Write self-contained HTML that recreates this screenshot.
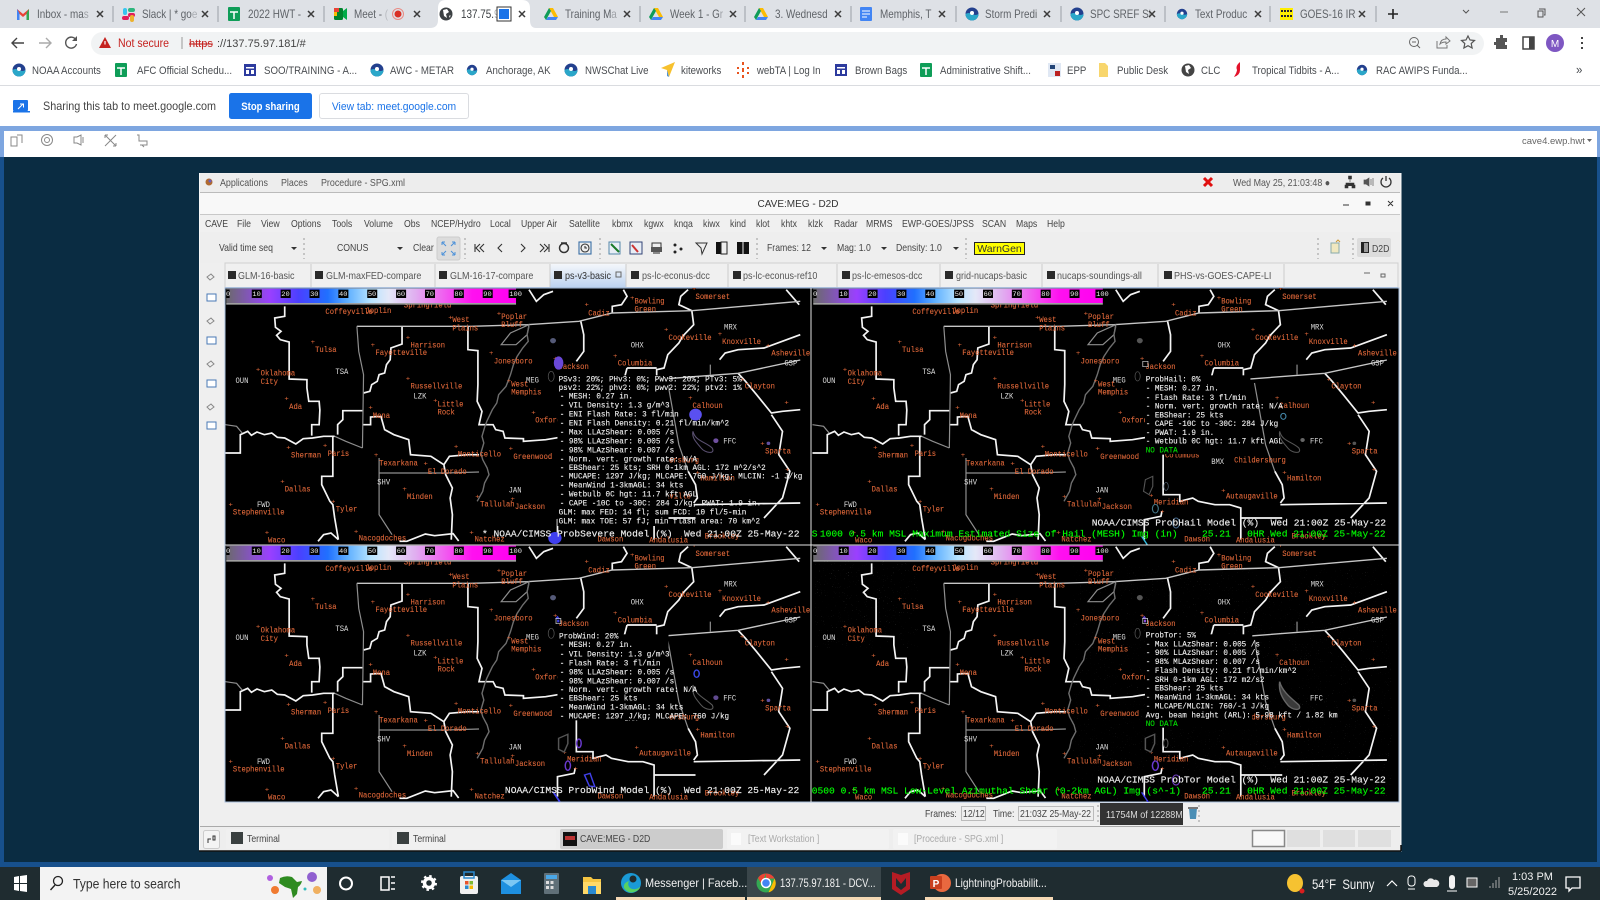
<!DOCTYPE html>
<html><head><meta charset="utf-8"><title>CAVE</title>
<style>
html,body{margin:0;padding:0;width:1600px;height:900px;overflow:hidden;background:#0a2c42}
svg{display:block}
text{white-space:pre}
.s{font-family:"Liberation Sans",sans-serif}
.tab text,.bk text,.g text,.mn text,text.mn,.tt text,text.tk,text.nw,.ro text,text.lb,text.id,.ti,.gr text{transform-box:fill-box;transform-origin:0 0}
.tab text{font-size:11.5px;fill:#5f6368;transform:scaleX(.86)}
.bk text{font-size:11px;fill:#4a4d51;transform:scaleX(.88)}
.g text{font-size:10px;fill:#555;transform:scaleX(.89)}
.mn text,text.mn{font-size:10px;fill:#444;transform:scaleX(.87)}
.tt text{font-size:10px;fill:#555;transform:scaleX(.9)}
text.tk{font-size:11.5px;fill:#f2f2f2;transform:scaleX(.88)}
.ln{fill:none;vector-effect:non-scaling-stroke}
.ro text{font-family:"Liberation Mono",monospace;font-size:24px;fill:#f0f0f0;stroke:#f0f0f0;stroke-width:.35px;transform:scaleX(.86)}
.ti{font-family:"Liberation Mono",monospace;font-size:28px;fill:#f0f0f0;stroke:#f0f0f0;stroke-width:.4px;transform:scaleX(.93)}
.gr text{font-family:"Liberation Mono",monospace;font-size:28px;fill:#0f0;stroke:#0f0;stroke-width:.4px;transform:scaleX(.93)}
text.lb{font-family:"Liberation Mono",monospace;font-size:24px;fill:#e0683a;stroke:#e0683a;stroke-width:.3px;transform:scaleX(.81)}
text.id{font-family:"Liberation Mono",monospace;font-size:24px;fill:#ddd;transform:scaleX(.81)}
.pl{font-family:"Liberation Mono",monospace;font-size:20px;fill:#e0683a}
.cb{font-family:"Liberation Mono",monospace;font-size:19px;fill:#eee;text-anchor:middle}
.c{transform-box:fill-box;transform-origin:50% 0}
</style></head>
<body>
<svg width="1600" height="900" viewBox="0 0 1600 900" class="s" xmlns="http://www.w3.org/2000/svg">
<defs>
<linearGradient id="cbar" x1="0" x2="1" y1="0" y2="0">
<stop offset="0" stop-color="#6a6a6a"/><stop offset=".1" stop-color="#8a50d0"/><stop offset=".15" stop-color="#9a40ff"/><stop offset=".25" stop-color="#4a40ff"/><stop offset=".35" stop-color="#2070ff"/><stop offset=".42" stop-color="#60b0ff"/><stop offset=".5" stop-color="#b8e4ff"/><stop offset=".56" stop-color="#e4e8f8"/><stop offset=".65" stop-color="#e0b0f0"/><stop offset=".75" stop-color="#f060f0"/><stop offset=".85" stop-color="#ff10f0"/><stop offset="1" stop-color="#ff00f0"/>
</linearGradient>
<linearGradient id="act" x1="0" x2="0" y1="0" y2="1"><stop offset="0" stop-color="#f4f7fb"/><stop offset="1" stop-color="#bdd3f0"/></linearGradient>
<filter id="nz" x="0" y="0" width="1" height="1"><feTurbulence type="fractalNoise" baseFrequency=".55" numOctaves="1" seed="4"/><feColorMatrix values="0 0 0 0 .7 0 0 0 0 .7 0 0 0 0 .7 7 0 0 0 -5"/></filter>
<path id="x" d="M-3-3L3 3M3-3L-3 3" stroke="#3c3c3c" stroke-width="1.5" fill="none"/>
<g id="noaa"><circle r="6.5" fill="#23408e"/><path d="M-6.5 0a6.5 6.5 0 0 0 13 0q-3 2-6.5 0t-6.5 0z" fill="#2ba7c9"/><circle r="2" cy="-1" fill="#fff"/></g>
<g id="drive"><path d="M-2-6h4l5 9h-4z" fill="#fbbc04"/><path d="M-2-6L-7 3l2 3 5-9z" fill="#0f9d58"/><path d="M-5 6h10l2-3H-3z" fill="#4285f4"/></g>
<g id="sheet"><rect x="-6" y="-7" width="12" height="14" rx="1" fill="#0f9d58"/><path d="M-4-2h8M0-2v7" stroke="#fff" stroke-width="1.5"/></g>
<g id="site"><rect x="-6" y="-6" width="12" height="12" fill="#2d3b9e"/><path d="M-4-3h8v1.5h-8zM-4 0h3v4h-3zM1 0h3v4H1z" fill="#fff"/></g>
<g id="base">
<path class="ln" stroke="#f4f4f4" stroke-width="1.7" d="M175 65v30l-27 5 2 28 15 12-12 12 10 13 24 7v111l48 2v25l5 40h28l2 26-2 44h-20v33M492 127v51l-30 12-2 35-10 15-5 25-15 5-5 20-15 10-5 20-17 5M670 127v68l27 3v102l-2 50 13 30-8 40h38l7 15 20 5 5 20 50 2v8l60-5 55-10M15 505h40v-55l20-10 10 12 15-10 20 8 20-5 15 13 20 2 30 18 20-16 25-2 30-5 30 0M385 378h-53v27l-14 15v30M305 455v120h-30v25l22 50 8 10 5 40 10 65M385 420h22v-23l28-2 10 40 25 15 40 15 5 45 55 5 35 25 15-25 50-5 30 0M605 540l5 30 18 40-6 30 6 50-3 75M1090 15l10 20-15 25-25 5v20M1265 15l-20 20-5 25 35 18 5 42-30 35-10 20-30 35-10 40-20 5v30M1100 250h80M1100 250l-10 42M835 15l20 35 20-20 25-10M1530 15l35 45M975 110l8 40v50l-20 30M1350 225l15-20 35-10 70-5 98-40M1400 266l20 24 30 40 40 55 30-5 48-5M1490 390l30 50-10 70 30 50-20 80-50 60M963 510v120h45v20l35-10 15 10 45 10h40l30 10v95M1173 700h112M1280 660l288-5M1280 655l10-15-5-40-20-40M912 765v-60l45-10 3-15M265 770l15-20 20-5 20 20M485 770h20l50-22 25 5 50-6 15 22"/>
<path class="ln" stroke="#c6c6c6" stroke-width="1.4" d="M370 125h310l150-5 140-10 90-25 215-7 293-28M1090 292l310-26 168-40"/>
<path class="ln" stroke="#8e8e8e" stroke-width="1.2" d="M370 125l5 75 13 70-3 220M430 520v170l35 60M430 565h180l90-3M835 120l-5 30-30 30h-40l25-35zM1210 295l30 185 25 80M1325 240v30M15 420l30 5 15 20M310 455l30 15 45 20"/>
<path class="ln" stroke="#6e6e6e" stroke-width="1.4" d="M835 125l-5 25 3 20-15 20-15 25-10 25-8 30-12 35-20 25-5 25-12 20-15 35-5 15-8 30 5 20-8 30 5 20 12 25 5 20-12 25-5 25-15 30"/>
<text class="lb" x="285" y="88">Coffeyville</text><text class="lb" x="393" y="85">Joplin</text><text class="lb" x="497" y="68">Springfield</text><text class="lb" x="1120" y="56">Bowling</text><text class="lb" x="1120" y="80">Green</text><text class="lb" x="1285" y="43">Somerset</text><text class="lb" x="995" y="92">Cadiz</text><text class="lb" x="628" y="112">West</text><text class="lb" x="628" y="137">Plains</text><text class="lb" x="760" y="103">Poplar</text><text class="lb" x="760" y="127">Bluff</text><text class="lb" x="1212" y="166">Cookeville</text><text class="lb" x="1357" y="178">Knoxville</text><text class="lb" x="1490" y="213">Asheville</text><text class="lb" x="257" y="202">Tulsa</text><text class="lb" x="515" y="189">Harrison</text><text class="lb" x="420" y="211">Fayetteville</text><text class="lb" x="740" y="236">Jonesboro</text><text class="lb" x="915" y="253">Jackson</text><text class="lb" x="1075" y="243">Columbia</text><text class="lb" x="110" y="273">Oklahoma</text><text class="lb" x="110" y="298">City</text><text class="lb" x="515" y="311">Russellville</text><text class="lb" x="588" y="366">Little</text><text class="lb" x="588" y="390">Rock</text><text class="lb" x="787" y="305">West</text><text class="lb" x="787" y="330">Memphis</text><text class="lb" x="1418" y="311">Clayton</text><text class="lb" x="1277" y="370">Calhoun</text><text class="lb" x="187" y="373">Ada</text><text class="lb" x="413" y="400">Mena</text><text class="lb" x="852" y="414">Oxford</text><text class="lb" x="192" y="519">Sherman</text><text class="lb" x="291" y="514">Paris</text><text class="lb" x="643" y="516">Monticello</text><text class="lb" x="793" y="523">Greenwood</text><text class="lb" x="1473" y="506">Sparta</text><text class="lb" x="430" y="542">Texarkana</text><text class="lb" x="562" y="568">El Dorado</text><text class="lb" x="175" y="621">Dallas</text><text class="lb" x="505" y="643">Minden</text><text class="lb" x="703" y="666">Tallulah</text><text class="lb" x="797" y="673">Jackson</text><text class="lb" x="35" y="690">Stephenville</text><text class="lb" x="313" y="681">Tyler</text><text class="lb" x="130" y="773">Waco</text><text class="lb" x="375" y="768">Nacogdoches</text><text class="lb" x="688" y="770">Natchez</text><text class="lb" x="1298" y="587">Hamilton</text><text class="lb" x="1133" y="642">Autaugaville</text><text class="lb" x="968" y="518">Columbus</text><text class="lb" x="1155" y="533">Childersburg</text><text class="lb" x="938" y="660">Meridian</text><text class="lb" x="1020" y="770">Dawson</text><text class="lb" x="1160" y="774">Andalusia</text><text class="lb" x="1310" y="762">Brookley</text>
<text class="pl" transform="translate(-5 6)" x="990 1113 1280 622 753 1205 1350 1480 250 507 412 732 905 1067 102 507 581 780 1410 1270 179 406 846 184 283 637 785 1465 421 555 168 498 695 790 28 305 126 367 679 1530 1532 1290 1125 930 1148 960" y="60 40 12 98 87 135 148 183 172 158 181 205 222 214 255 281 347 289 285 340 342 369 384 489 483 485 492 477 511 537 591 613 635 643 660 651 744 740 743 353 555 563 617 632 500 680">++++++++++++++++++++++++++++++++++++++++++++++</text>
<text class="id" x="312" y="268">TSA</text><text class="id" x="523" y="341">LZK</text><text class="id" x="42" y="295">OUN</text><text class="id" x="827" y="293">MEG</text><text class="id" x="1110" y="189">OHX</text><text class="id" x="1362" y="135">MRX</text><text class="id" x="1525" y="242">GSP</text><text class="id" x="780" y="624">JAN</text><text class="id" x="425" y="600">SHV</text><text class="id" x="100" y="667">FWD</text><text class="id" x="1093" y="538">BMX</text><text class="id" x="1360" y="476">FFC</text>
<rect x="17" y="12" width="783" height="43" fill="url(#cbar)"/><rect x="17" y="55" width="783" height="5" fill="#a0a0a0"/>
<path fill="#000" d="M17 15h9v25h-9zM86 15h27v25H86zM164 15h27v25h-27zM242 15h27v25h-27zM320 15h27v25h-27zM398 15h27v25h-27zM476 15h27v25h-27zM554 15h27v25h-27zM632 15h27v25h-27zM710 15h27v25h-27zM780 15h38v25h-38z"/>
<text class="cb" x="22" y="34">0</text><text class="cb" x="99" y="34">10</text><text class="cb" x="177" y="34">20</text><text class="cb" x="255" y="34">30</text><text class="cb" x="333" y="34">40</text><text class="cb" x="411" y="34">50</text><text class="cb" x="489" y="34">60</text><text class="cb" x="567" y="34">70</text><text class="cb" x="645" y="34">80</text><text class="cb" x="723" y="34">90</text><text class="cb" x="799" y="34">100</text>
</g>
</defs>

<rect width="1600" height="900" fill="#0a2c42"/>
<rect width="4" height="705" y="157" fill="#17508c"/><rect x="1597" y="157" width="3" height="705" fill="#17508c"/><rect y="862" width="1600" height="5" fill="#17508c"/>

<!-- Chrome -->
<rect width="1600" height="28" fill="#dee1e6"/>
<rect y="28" width="1600" height="57" fill="#fff"/>
<rect y="85" width="1600" height="1" fill="#dadce0"/>
<rect y="86" width="1600" height="41" fill="#fff"/>
<path d="M430 28q8 0 8-8V8q0-8 8-8h76q8 0 8 8v12q0 8 6 8z" fill="#fff"/>
<rect x="91" y="32" width="1393" height="23" rx="11.5" fill="#f1f3f4"/>
<path stroke="#9aa0a6" d="M113 6v16M218 6v16M324 6v16M640 6v16M745 6v16M851 6v16M956 6v16M1061 6v16M1165 6v16M1270 6v16M1376 6v16"/>
<g class="tab">
<text x="37" y="18">Inbox - ma<tspan opacity=".5">s</tspan></text><text x="142" y="18">Slack | * go<tspan opacity=".4">e</tspan></text><text x="248" y="18">2022 HWT - </text><text x="354" y="18">Meet - <tspan opacity=".3">(</tspan></text><text x="461" y="18" style="fill:#3c4043">137.75.<tspan opacity=".4">9</tspan></text><text x="565" y="18">Training M<tspan opacity=".5">a</tspan></text><text x="670" y="18">Week 1 - G<tspan opacity=".5">r</tspan></text><text x="775" y="18">3. Wednesd</text><text x="880" y="18">Memphis, T</text><text x="985" y="18">Storm Predi</text><text x="1090" y="18">SPC SREF S<tspan opacity=".5">l</tspan></text><text x="1195" y="18">Text Produc</text><text x="1300" y="18">GOES-16 IR<tspan opacity=".5"> </tspan></text>
</g>
<use href="#x" x="100" y="14"/><use href="#x" x="205" y="14"/><use href="#x" x="311" y="14"/><use href="#x" x="417" y="14"/><use href="#x" x="522" y="14"/><use href="#x" x="627" y="14"/><use href="#x" x="733" y="14"/><use href="#x" x="838" y="14"/><use href="#x" x="942" y="14"/><use href="#x" x="1047" y="14"/><use href="#x" x="1152" y="14"/><use href="#x" x="1258" y="14"/><use href="#x" x="1362" y="14"/>
<!-- tab icons -->
<path d="M17 20V9l6 5 6-5v11h-2.5v-6L23 17l-3.5-3v6z" fill="#ea4335"/><path d="M17 9v11h2.5v-7z" fill="#4285f4"/><path d="M29 9v11h-2.5v-7z" fill="#34a853"/>
<g><rect x="123" y="8" width="4" height="7" rx="2" fill="#36c5f0"/><rect x="128" y="13" width="7" height="4" rx="2" fill="#e01e5a"/><rect x="128" y="8" width="7" height="4" rx="2" fill="#2eb67d"/><rect x="130" y="15" width="4" height="7" rx="2" fill="#ecb22e"/><rect x="122" y="16" width="7" height="4" rx="2" fill="#e01e5a"/></g>
<use href="#sheet" x="234" y="14"/>
<rect x="334" y="8" width="9" height="12" rx="1.5" fill="#00832d"/><path d="M334 8h5v4h-5z" fill="#ea4335"/><path d="M334 12h3v4h-3z" fill="#fbbc04"/><path d="M343 11l4-3v12l-4-3z" fill="#00ac47"/>
<circle cx="398" cy="14" r="5.5" fill="none" stroke="#e98b84"/><circle cx="398" cy="14" r="3.5" fill="#d93025"/>
<circle cx="446" cy="14" r="6.5" fill="#3c4043"/><path d="M443 10l4-1 2 3-3 2 1 4-3-2zM449 16l1.5-1-.5 3z" fill="#fff"/>
<rect x="497" y="7" width="14" height="14" fill="#fff" stroke="#333"/><rect x="499" y="9" width="10" height="10" fill="#1a73e8"/>
<use href="#drive" x="551" y="14"/><use href="#drive" x="656" y="14"/><use href="#drive" x="761" y="14"/>
<rect x="860" y="7" width="12" height="14" rx="1" fill="#4285f4"/><path d="M862 11h8M862 14h8M862 17h5" stroke="#fff"/>
<use href="#noaa" x="972" y="14"/><use href="#noaa" x="1077" y="14"/><g transform="translate(1182 14) scale(.8)"><use href="#noaa"/></g>
<rect x="1280" y="8" width="13" height="12" fill="#ffee00"/><path d="M1281 11h11M1281 16h11" stroke="#223" stroke-width="2" stroke-dasharray="2 1"/>
<path d="M1388 14h10M1393 9v10" stroke="#222" stroke-width="1.6"/>
<path d="M1463 10l3 3 3-3" stroke="#555" fill="none"/><path d="M1500 12h8" stroke="#777"/><path d="M1539 9h6v6h-1M1538 11h5v6h-5z" stroke="#555" fill="none"/><path d="M1577 8l8 8M1585 8l-8 8" stroke="#555"/>
<!-- toolbar -->
<path d="M24 43H12M17 38l-5 5 5 5" stroke="#444" stroke-width="1.4" fill="none"/><path d="M39 43h12M46 38l5 5-5 5" stroke="#aaa" stroke-width="1.4" fill="none"/>
<path d="M76 40a5.5 5.5 0 1 0 .5 4" stroke="#555" stroke-width="1.4" fill="none"/><path d="M77 36v5h-5z" fill="#555"/>
<path d="M105 37l6 11H99z" fill="#c5221f"/><rect x="104.4" y="41" width="1.2" height="3.5" fill="#fff"/>
<text class="nw" x="118" y="47" font-size="12" fill="#c5221f" style="transform:scaleX(.88)">Not secure</text><path d="M182 37v12" stroke="#999"/>
<text x="189" y="47" font-size="11" fill="#c5221f" text-decoration="line-through">https</text><text x="217" y="47" font-size="11" fill="#444">://137.75.97.181/#</text>
<circle cx="1414" cy="42" r="4.5" stroke="#666" fill="none"/><path d="M1417 45l3 3M1412 42h4" stroke="#666"/>
<path d="M1437 41v7h10v-3M1440 44q1-5 6-5v-2l4 4-4 3v-2q-4 0-6 2z" stroke="#777" fill="none"/>
<path d="M1468 36l2 4 4.500 .5-3.300 3 .9 4.500-4.100-2.300-4.100 2.300 .9-4.500-3.300-3 4.500-.5z" stroke="#555" fill="none" stroke-width="1.2"/>
<path d="M1496 38h4v-3h3v3h4v4h-2v3h2v4h-11v-4h-2v-3h2z" fill="#555"/>
<rect x="1523" y="37" width="11" height="12" fill="none" stroke="#444" stroke-width="1.5"/><rect x="1529" y="37" width="5" height="12" fill="#444"/>
<circle cx="1555" cy="43" r="9" fill="#7e57c2"/><text x="1555" y="47" font-size="10" fill="#fff" text-anchor="middle">M</text>
<path d="M1582 37v2M1582 42v2M1582 47v2" stroke="#444" stroke-width="2"/>
<!-- bookmarks -->
<g class="bk"><text x="32" y="74">NOAA Accounts</text><text x="137" y="74">AFC Official Schedu...</text><text x="264" y="74">SOO/TRAINING - A...</text><text x="390" y="74">AWC - METAR</text><text x="486" y="74">Anchorage, AK</text><text x="585" y="74">NWSChat Live</text><text x="681" y="74">kiteworks</text><text x="757" y="74">webTA | Log In</text><text x="855" y="74">Brown Bags</text><text x="940" y="74">Administrative Shift...</text><text x="1067" y="74">EPP</text><text x="1117" y="74">Public Desk</text><text x="1201" y="74">CLC</text><text x="1252" y="74">Tropical Tidbits - A...</text><text x="1376" y="74">RAC AWIPS Funda...</text><text x="1576" y="74" style="font-size:13px">»</text></g>
<use href="#noaa" x="19" y="70"/><use href="#sheet" x="121" y="70"/><use href="#site" x="250" y="70"/><use href="#noaa" x="377" y="70"/><g transform="translate(472 70) scale(.8)"><use href="#noaa"/></g><use href="#noaa" x="571" y="70"/>
<path d="M661 68l14-6-6 15-2-7z" fill="#f7c12e"/><path d="M667 70l2 7-2-1z" fill="#4a90d9"/>
<path d="M743 62v3M743 75v3M738 67v2M748 67v2M738 72v2M748 72v2M743 68v4" stroke="#e8541e" stroke-width="2"/>
<use href="#site" x="841" y="70"/><use href="#sheet" x="926" y="70"/>
<rect x="1048" y="63" width="13" height="14" fill="#e0e8f4"/><rect x="1050" y="65" width="5" height="4" fill="#247"/><rect x="1055" y="71" width="5" height="5" fill="#b22"/>
<path d="M1099 63h6l3 3v11h-9z" fill="#f8d66d"/>
<circle cx="1188" cy="70" r="6.500" fill="#444"/><path d="M1185 66l4-1 2 3-3 2 1 4-3-2z" fill="#fff"/>
<path d="M1240 62q-5 4-3 8 0 2-3 7 6-2 6-7 0-3 0-8z" fill="#e3122a"/><g transform="translate(1362 70) scale(.8)"><use href="#noaa"/></g>
<!-- sharing -->
<rect x="13" y="100" width="15" height="11" rx="1" fill="#1a73e8"/><rect x="13" y="111" width="17" height="1.500" fill="#1a73e8"/><path d="M18 109l5-5M20 104h3.500v3.500" stroke="#fff" fill="none"/>
<text class="nw" x="43" y="110" font-size="11.5" fill="#444" style="transform:scaleX(.94)">Sharing this tab to meet.google.com</text>
<rect x="229" y="93" width="83" height="26" rx="2.500" fill="#1a73e8"/><text class="c" x="270.500" y="110" font-size="11" font-weight="bold" fill="#fff" text-anchor="middle" style="transform:scaleX(.87)">Stop sharing</text>
<rect x="319.500" y="93.500" width="149" height="25" rx="2.500" fill="#fff" stroke="#dadce0"/><text class="c" x="394" y="110" font-size="11" fill="#1a73e8" text-anchor="middle" style="transform:scaleX(.94)">View tab: meet.google.com</text>
<!-- DCV strip -->
<rect y="126" width="1600" height="5" fill="#7ea6e0"/><rect y="131" x="4" width="1593" height="26" fill="#fff"/><rect x="0" y="131" width="4" height="26" fill="#7ea6e0"/><rect x="1597" y="131" width="3" height="26" fill="#7ea6e0"/>
<g stroke="#888" fill="none"><path d="M11 137h6v9h-6zM17 135h5v8"/><circle cx="47" cy="140" r="5.500"/><circle cx="47" cy="140" r="2.500"/><path d="M74 137h3l4-2v10l-4-2h-3zM83 137v6"/><path d="M105 135l11 11M116 135l-11 11M105 135h3M105 135v3M116 146h-3M116 146v-3"/><path d="M137 135h2v6h8v4h-7M142 145l2 2"/></g>
<text x="1522" y="144" font-size="9.500" fill="#666">cave4.ewp.hwt</text><path d="M1587 139h5l-2.500 3z" fill="#666"/>

<!-- CAVE window -->
<rect x="199" y="173" width="1202" height="678" fill="#efefef"/>
<path d="M199.500 173v678h1201.500V173" fill="none" stroke="#f8f8f8"/><path d="M199 851h1202M1401 845v6" stroke="#111" stroke-width="1.500"/>
<rect x="200" y="174" width="1200" height="18" fill="#ededed"/><rect x="200" y="192" width="1200" height="1" fill="#bbb"/>
<circle cx="209" cy="182" r="3.500" fill="#b06a30"/><circle cx="210" cy="181" r="1.500" fill="#6a5ec0"/>
<g class="g"><text x="220" y="186">Applications</text><text x="281" y="186">Places</text><text x="321" y="186">Procedure - SPG.xml</text><text x="1233" y="186">Wed May 25, 21:03:48 ●</text></g>
<path d="M1204 178l8 8M1212 178l-8 8" stroke="#e01010" stroke-width="3"/>
<path d="M1350 178v4M1346 186v-3h8v3M1345 185h3v3h-3zM1352 185h3v3h-3zM1348.500 176h3v3h-3z" stroke="#333" fill="#333" stroke-width=".6"/>
<path d="M1364 180h2l3-2v8l-3-2h-2zM1371 179v6M1373 178v8" stroke="#555" fill="#555" stroke-width=".7"/>
<path d="M1383 178a5 5 0 1 0 6 0M1386 176v5" stroke="#333" fill="none" stroke-width="1.300"/>
<rect x="200" y="193" width="1200" height="21" fill="#f8f8f8"/><rect x="200" y="214" width="1200" height="1" fill="#c8c8c8"/>
<text x="798" y="207" font-size="10" fill="#333" text-anchor="middle">CAVE:MEG - D2D</text>
<path d="M1343 205h6M1366 202h4v3h-4zM1388 201l5 5M1393 201l-5 5" stroke="#333" fill="#333"/>
<rect x="200" y="215" width="1200" height="17" fill="#f0f0f0"/>
<g class="mn"><text x="205" y="227">CAVE</text><text x="237" y="227">File</text><text x="261" y="227">View</text><text x="291" y="227">Options</text><text x="332" y="227">Tools</text><text x="364" y="227">Volume</text><text x="404" y="227">Obs</text><text x="431" y="227">NCEP/Hydro</text><text x="490" y="227">Local</text><text x="521" y="227">Upper Air</text><text x="569" y="227">Satellite</text><text x="612" y="227">kbmx</text><text x="644" y="227">kgwx</text><text x="674" y="227">knqa</text><text x="703" y="227">kiwx</text><text x="730" y="227">kind</text><text x="756" y="227">klot</text><text x="781" y="227">khtx</text><text x="808" y="227">klzk</text><text x="834" y="227">Radar</text><text x="866" y="227">MRMS</text><text x="902" y="227">EWP-GOES/JPSS</text><text x="982" y="227">SCAN</text><text x="1016" y="227">Maps</text><text x="1047" y="227">Help</text></g>
<!-- cave toolbar -->
<rect x="200" y="232" width="1200" height="31" fill="#eeeeee"/>
<g class="mn"><text x="219" y="251">Valid time seq</text><text x="337" y="251">CONUS</text><text x="413" y="251">Clear</text><text x="767" y="251">Frames: 12</text><text x="837" y="251">Mag: 1.0</text><text x="896" y="251">Density: 1.0</text></g>
<path d="M291 247h6l-3 3zM397 247h6l-3 3zM821 247h6l-3 3zM881 247h6l-3 3zM953 247h6l-3 3z" fill="#333"/>
<path d="M304 238v21M465 238v21M600 238v21M757 238v21M966 238v21M1318 238v21M1353 238v21" stroke="#999" stroke-dasharray="2 3"/>
<rect x="437" y="237" width="23" height="23" rx="2" fill="#dcdcdc" stroke="#ccc"/><path d="M442 242l4 4M455 242l-4 4M442 255l4-4M455 255l-4-4M442 242h3M442 242v3M455 242h-3M455 242v3M442 255h3M442 255v-3M455 255h-3M455 255v-3" stroke="#4a90d9" fill="none"/>
<g stroke="#333" fill="none" stroke-width="1.100"><path d="M475 244v8M484 244l-4 4 4 4M480 244l-4 4 4 4"/><path d="M502 244l-4 4 4 4M521 244l4 4-4 4"/><path d="M540 244l4 4-4 4M544 244l4 4-4 4M549 244v8"/><circle cx="564" cy="248" r="4.500" stroke-width="1.500"/><path d="M561 243h6" stroke-width="1.500"/><rect x="579" y="242" width="12" height="12" stroke="#3a6ea5"/><circle cx="585" cy="248" r="4"/><path d="M585 246v2h2"/></g>
<g><rect x="609" y="242" width="11" height="12" fill="#e8eef6" stroke="#58a"/><path d="M611 244l3 3 3 3 2 2" stroke="#1a7a2a" stroke-width="2"/><rect x="630" y="242" width="12" height="12" fill="#e8eef6" stroke="#347"/><path d="M632 245l6 7" stroke="#c33" stroke-width="2"/><rect x="652" y="243" width="9" height="5" fill="none" stroke="#333"/><rect x="651" y="247" width="11" height="5" fill="#555"/><path d="M653 252h7v2h-7z" fill="#888"/><circle cx="675" cy="245" r="1.500" fill="#222"/><circle cx="681" cy="249" r="1.500" fill="#222"/><circle cx="675" cy="252" r="1.500" fill="#222"/><path d="M696 243h11l-5 11-1-6z" stroke="#333" fill="none"/><rect x="716" y="242" width="5" height="12" fill="#111"/><rect x="721" y="242" width="6" height="12" fill="none" stroke="#222"/><rect x="737" y="242" width="12" height="12" fill="#111"/><path d="M743 242v12" stroke="#eee"/></g>
<rect x="974.500" y="242.500" width="50" height="12" fill="#ff0" stroke="#222"/><text x="999.500" y="252" font-size="10.500" fill="#333" text-anchor="middle">WarnGen</text>
<rect x="1331" y="243" width="8" height="10" fill="#f0e8c0" stroke="#8aa"/><path d="M1336 242l2-2 2 2" stroke="#c93" fill="none"/>
<rect x="1357" y="238" width="34" height="19" rx="2" fill="#dcdcdc"/><rect x="1361" y="242" width="8" height="11" fill="#222"/><rect x="1364" y="243" width="4" height="9" fill="#999"/><text x="1372" y="252" class="mn">D2D</text>
<!-- editor tabs -->
<rect x="225" y="263" width="1173" height="25" fill="#f0f0f0" stroke="#d0d0d0"/>
<rect x="550" y="264" width="76" height="23" fill="url(#act)"/>
<path d="M311 264v23M435 264v23M550 264v23M626 264v23M728 264v23M837 264v23M940 264v23M1042 264v23M1158 264v23M1284 264v23" stroke="#ccc"/>
<rect x="225" y="287" width="1173" height="1.500" fill="#a9bfdc"/>
<g fill="#2a2a2a"><rect x="228" y="271" width="8" height="8"/><rect x="315" y="271" width="8" height="8"/><rect x="439" y="271" width="8" height="8"/><rect x="554" y="271" width="8" height="8"/><rect x="631" y="271" width="8" height="8"/><rect x="733" y="271" width="8" height="8"/><rect x="842" y="271" width="8" height="8"/><rect x="945" y="271" width="8" height="8"/><rect x="1047" y="271" width="8" height="8"/><rect x="1164" y="271" width="8" height="8"/></g>
<g class="tt"><text x="238" y="279">GLM-16-basic</text><text x="326" y="279">GLM-maxFED-compare</text><text x="450" y="279">GLM-16-17-compare</text><text x="565" y="279" style="fill:#333">ps-v3-basic</text><text x="642" y="279">ps-lc-econus-dcc</text><text x="743" y="279">ps-lc-econus-ref10</text><text x="852" y="279">ps-lc-emesos-dcc</text><text x="956" y="279">grid-nucaps-basic</text><text x="1057" y="279">nucaps-soundings-all</text><text x="1174" y="279">PHS-vs-GOES-CAPE-LI</text></g>
<path d="M616 272h5v5h-5zM1364 273h6M1381 274h4v3h-4z" stroke="#666" fill="none"/>
<!-- left strip -->
<g fill="none" stroke="#888"><path d="M207 277l4-3 3 3-4 3z"/><rect x="207" y="294" width="9" height="7" stroke="#4a78b5" fill="#fff"/><path d="M207 321l4-3 3 3-4 3z"/><rect x="207" y="337" width="9" height="7" stroke="#4a78b5" fill="#fff"/><path d="M207 364l4-3 3 3-4 3z"/><rect x="207" y="380" width="9" height="7" stroke="#4a78b5" fill="#fff"/><path d="M207 407l4-3 3 3-4 3z"/><rect x="207" y="422" width="9" height="7" stroke="#4a78b5" fill="#fff"/></g>

<!-- MAP panels -->
<rect x="225" y="288" width="1174" height="514" fill="#000" stroke="#a9bfdc"/>
<svg x="225.500" y="288" width="585.500" height="257" viewBox="15 10 1582 771" preserveAspectRatio="none">
<use href="#base"/>
<rect x="912" y="272" width="300" height="452" fill="#000"/>
<circle cx="900" cy="168" r="8" fill="#555a78"/><ellipse cx="915" cy="235" rx="13" ry="20" fill="#6a48d8"/><ellipse cx="895" cy="275" rx="8" ry="15" fill="none" stroke="#555" stroke-width="2"/><ellipse cx="1285" cy="390" rx="17" ry="18" fill="#5a50f0"/><path d="M1278 440c7 30 32 30 52 50 10 20-20 15-30 0-15-20-25-30-22-50z" fill="none" stroke="#5a5070" stroke-width="3"/><circle cx="1340" cy="468" r="7" fill="#7050a0"/><circle cx="1482" cy="476" r="5" fill="#6050a0"/><ellipse cx="905" cy="760" rx="18" ry="18" fill="#4040f0"/>
<g class="ro"><text x="915" y="290">PSv3: 20%; PHv3: 0%; PWv3: 20%; PTv3: 5%</text><text x="915" y="316">psv2: 22%; phv2: 0%; pwv2: 22%; ptv2: 1%</text><text x="918" y="342">- MESH: 0.27 in.</text><text x="918" y="369">- VIL Density: 1.3 g/m^3</text><text x="918" y="396">- ENI Flash Rate: 3 fl/min</text><text x="918" y="423">- ENI Flash Density: 0.21 fl/min/km^2</text><text x="918" y="450">- Max LLAzShear: 0.005 /s</text><text x="918" y="477">- 98% LLAzShear: 0.005 /s</text><text x="918" y="503">- 98% MLAzShear: 0.007 /s</text><text x="918" y="530">- Norm. vert. growth rate: N/A</text><text x="918" y="556">- EBShear: 25 kts; SRH 0-1km AGL: 172 m^2/s^2</text><text x="918" y="582">- MUCAPE: 1297 J/kg; MLCAPE: 760 J/kg; MLCIN: -1 J/kg</text><text x="918" y="608">- MeanWind 1-3kmAGL: 34 kts</text><text x="918" y="635">- Wetbulb 0C hgt: 11.7 kft AGL</text><text x="918" y="662">- CAPE -10C to -30C: 284 J/kg; PWAT: 1.9 in.</text><text x="915" y="689">GLM: max FED: 14 fl; sum FCD: 10 fl/5-min</text><text x="915" y="716">GLM: max TOE: 57 fJ; min flash area: 70 km^2</text></g>
<text class="ti" x="708" y="756">* NOAA/CIMSS ProbSevere Model (%)  Wed 21:00Z 25-May-22</text>
</svg>
<svg x="811" y="288" width="587" height="257" viewBox="11 10 1587 771" preserveAspectRatio="none">
<use href="#base"/>
<rect x="914" y="272" width="285" height="236" fill="#000"/>
<circle cx="900" cy="168" r="8" fill="#555"/><rect x="908" y="230" width="14" height="16" fill="none" stroke="#ccc" stroke-width="2"/><ellipse cx="894" cy="275" rx="7" ry="14" fill="none" stroke="#555" stroke-width="2"/><ellipse cx="1288" cy="395" rx="7" ry="9" fill="none" stroke="#48a" stroke-width="3"/><path d="M1278 440c7 30 32 30 52 50 10 20-20 15-30 0-15-20-25-30-22-50z" fill="none" stroke="#555" stroke-width="3"/><circle cx="1340" cy="466" r="6" fill="#666"/><circle cx="1480" cy="476" r="5" fill="#555"/><path d="M915 585l20-10v30l-10 25-15-10z" fill="none" stroke="#555" stroke-width="3"/><ellipse cx="971" cy="605" rx="6" ry="12" fill="none" stroke="#567" stroke-width="2"/><ellipse cx="942" cy="672" rx="8" ry="13" fill="none" stroke="#478" stroke-width="3"/><ellipse cx="998" cy="715" rx="9" ry="15" fill="none" stroke="#468" stroke-width="3"/><path d="M905 755l15 25" stroke="#3bd" stroke-width="4"/>
<g class="ro"><text x="916" y="290">ProbHail: 0%</text><text x="916" y="318">- MESH: 0.27 in.</text><text x="916" y="346">- Flash Rate: 3 fl/min</text><text x="916" y="372">- Norm. vert. growth rate: N/A</text><text x="916" y="399">- EBShear: 25 kts</text><text x="916" y="424">- CAPE -10C to -30C: 284 J/kg</text><text x="916" y="451">- PWAT: 1.9 in.</text><text x="916" y="477">- Wetbulb 0C hgt: 11.7 kft AGL</text><text x="916" y="503" style="fill:#00e000;stroke:#00e000">NO DATA</text></g>
<text class="ti" x="770" y="723">NOAA/CIMSS ProbHail Model (%)  Wed 21:00Z 25-May-22</text>
<g class="gr"><text x="13" y="756">S</text><text x="35" y="756">1000 0.5 km MSL Maximum Estimated Size of Hail (MESH) Img (in)</text><text x="1068" y="756">25.21</text><text x="1190" y="756">0HR Wed 21:00Z 25-May-22</text></g>
</svg>
<svg x="225.500" y="545" width="585.500" height="257" viewBox="15 10 1582 771" preserveAspectRatio="none">
<use href="#base"/>
<rect x="912" y="278" width="300" height="258" fill="#000"/>
<circle cx="900" cy="168" r="8" fill="#555a78"/><path d="M905 232l7-10 7 10z" fill="#3a3ae0"/><rect x="908" y="230" width="13" height="16" fill="none" stroke="#ccc" stroke-width="2"/><rect x="911" y="234" width="6" height="8" fill="#3a3ae0"/><ellipse cx="895" cy="275" rx="8" ry="15" fill="none" stroke="#555" stroke-width="2"/><ellipse cx="1288" cy="396" rx="7" ry="11" fill="none" stroke="#3a48e8" stroke-width="4"/><path d="M1278 430c7 30 32 40 52 60 10 20-20 15-30 0-15-20-25-30-22-60z" fill="none" stroke="#5a5a5a" stroke-width="3"/><circle cx="1340" cy="468" r="7" fill="#604a90"/><circle cx="1482" cy="476" r="5" fill="#6050a0"/><path d="M915 590l25-12v28l-10 25-15-8z" fill="none" stroke="#555" stroke-width="4"/><ellipse cx="970" cy="605" rx="6" ry="13" fill="none" stroke="#6a3ad0" stroke-width="4"/><ellipse cx="940" cy="672" rx="7" ry="14" fill="none" stroke="#6a3ad0" stroke-width="4"/><path d="M985 700l15-5 8 25 5 15-15-2z" fill="none" stroke="#4040e8" stroke-width="4"/><path d="M900 750l18 30" stroke="#4040f0" stroke-width="5"/>
<g class="ro"><text x="916" y="290">ProbWind: 20%</text><text x="918" y="316">- MESH: 0.27 in.</text><text x="918" y="345">- VIL Density: 1.3 g/m^3</text><text x="918" y="372">- Flash Rate: 3 fl/min</text><text x="918" y="398">- 98% LLAzShear: 0.005 /s</text><text x="918" y="425">- 98% MLAzShear: 0.007 /s</text><text x="918" y="451">- Norm. vert. growth rate: N/A</text><text x="918" y="477">- EBShear: 25 kts</text><text x="918" y="504">- MeanWind 1-3kmAGL: 34 kts</text><text x="918" y="530">- MUCAPE: 1297 J/kg; MLCAPE: 760 J/kg</text></g>
<text class="ti" x="770" y="754">NOAA/CIMSS ProbWind Model (%)  Wed 21:00Z 25-May-22</text>
</svg>
<svg x="811" y="545" width="587" height="257" viewBox="11 10 1587 771" preserveAspectRatio="none">
<use href="#base"/>
<rect x="20" y="60" width="280" height="260" filter="url(#nz)" opacity=".6"/><rect x="720" y="70" width="860" height="700" filter="url(#nz)" opacity=".4"/>
<rect x="914" y="278" width="290" height="280" fill="#000"/>
<circle cx="900" cy="168" r="8" fill="#555"/><path d="M905 232l7-10 7 10z" fill="#6a4ad0"/><rect x="908" y="230" width="13" height="16" fill="none" stroke="#ccc" stroke-width="2"/><rect x="911" y="234" width="6" height="8" fill="#8a50e0"/><ellipse cx="894" cy="275" rx="7" ry="15" fill="none" stroke="#555" stroke-width="2"/><path d="M1278 420c7 30 32 50 52 70 10 20-20 15-30 0-15-20-25-40-22-70z" fill="#3a3a3a" stroke="#666" stroke-width="4"/><circle cx="1480" cy="476" r="5" fill="#555"/><path d="M915 590l25-12v28l-10 25-15-8z" fill="none" stroke="#555" stroke-width="4"/><ellipse cx="970" cy="605" rx="6" ry="13" fill="none" stroke="#555" stroke-width="3"/><ellipse cx="942" cy="672" rx="8" ry="14" fill="none" stroke="#6a3ad0" stroke-width="4"/><ellipse cx="998" cy="715" rx="10" ry="15" fill="none" stroke="#7040c0" stroke-width="3"/><path d="M905 752l18 30" stroke="#4040f0" stroke-width="4"/>
<g class="ro"><text x="916" y="288">ProbTor: 5%</text><text x="916" y="314">- Max LLAzShear: 0.005 /s</text><text x="916" y="340">- 90% LLAzShear: 0.005 /s</text><text x="916" y="367">- 98% MLAzShear: 0.007 /s</text><text x="916" y="394">- Flash Density: 0.21 fl/min/km^2</text><text x="916" y="421">- SRH 0-1km AGL: 172 m2/s2</text><text x="916" y="446">- EBShear: 25 kts</text><text x="916" y="473">- MeanWind 1-3kmAGL: 34 kts</text><text x="916" y="500">- MLCAPE/MLCIN: 760/-1 J/kg</text><text x="916" y="527">Avg. beam height (ARL): 5.98 kft / 1.82 km</text><text x="916" y="553" style="fill:#00e000;stroke:#00e000">NO DATA</text></g>
<text class="ti" x="785" y="722">NOAA/CIMSS ProbTor Model (%)  Wed 21:00Z 25-May-22</text>
<g class="gr"><text x="13" y="755">0500 0.5 km MSL Low-Level Azimuthal Shear (0-2km AGL) Img (s^-1)</text><text x="1068" y="755">25.21</text><text x="1190" y="755">0HR Wed 21:00Z 25-May-22</text></g>
</svg>
<path d="M811 288v514M225 545h1174" stroke="#e4e4e4"/>

<!-- status -->
<text x="925" y="817" class="mn">Frames:</text><rect x="961.500" y="806.500" width="24" height="14" fill="#efefef" stroke="#bbb"/><text x="963" y="817" class="mn">12/12</text>
<text x="993" y="817" class="mn">Time:</text><rect x="1018.500" y="806.500" width="75" height="14" fill="#efefef" stroke="#bbb"/><text x="1020" y="817" class="mn">21:03Z 25-May-22</text>
<path d="M1098 805v20M1199 805v20" stroke="#999" stroke-dasharray="2 3"/>
<rect x="1100" y="803" width="83" height="22" fill="#333"/><text class="nw" x="1106" y="818" font-size="10" fill="#ddd" style="transform:scaleX(.9)">11754M of 12288M</text>
<path d="M1189 808h8l-1 11h-6z" fill="#4a8eb5"/><rect x="1188" y="807" width="10" height="2" fill="#777"/>
<rect x="200" y="826" width="1200" height="1" fill="#aaa"/>
<rect x="200" y="827" width="1200" height="23" fill="#eeeeee"/>
<rect x="203.500" y="830.500" width="16" height="18" rx="2" fill="#f4f4f4" stroke="#ccc"/><path d="M208 843v-4h3M213 836h2v4h-2z" stroke="#333" fill="none"/>
<rect x="226" y="829" width="163" height="20" rx="2" fill="#f0f0f0"/><rect x="392" y="829" width="164" height="20" rx="2" fill="#f0f0f0"/><rect x="560" y="829" width="163" height="20" rx="2" fill="#cccccc"/><rect x="727" y="829" width="162" height="20" rx="2" fill="#f2f2f2"/><rect x="893" y="829" width="164" height="20" rx="2" fill="#f2f2f2"/>
<rect x="231" y="832" width="12" height="12" fill="#3a4040"/><rect x="397" y="832" width="12" height="12" fill="#3a4040"/><rect x="563" y="832" width="14" height="14" fill="#111"/><rect x="565" y="836" width="10" height="4" fill="#b33"/><rect x="731" y="833" width="10" height="12" fill="#fbfbfb"/><rect x="898" y="833" width="10" height="12" fill="#fbfbfb"/>
<g class="mn"><text x="247" y="842">Terminal</text><text x="413" y="842">Terminal</text><text x="580" y="842">CAVE:MEG - D2D</text><text x="748" y="842" style="fill:#aaa">[Text Workstation ]</text><text x="914" y="842" style="fill:#aaa">[Procedure - SPG.xml ]</text></g>
<rect x="1252.500" y="830.500" width="32" height="16" fill="#f8f8f8" stroke="#888" stroke-width="1.500"/><rect x="1287" y="830" width="33" height="17" fill="#dfdfdf"/><rect x="1323" y="830" width="32" height="17" fill="#dfdfdf"/><rect x="1358" y="830" width="33" height="17" fill="#dfdfdf"/>

<!-- Windows taskbar -->
<rect y="867" width="1600" height="33" fill="#1f2c30"/>
<path d="M14 877l5-1v7h-5zM20 876l7-1v8h-7zM14 884h5v7l-5-1zM20 884h7v8l-7-1z" fill="#fff"/>
<rect x="40" y="867" width="287" height="33" fill="#f3f3f3"/>
<circle cx="58" cy="881" r="4.500" stroke="#222" fill="none" stroke-width="1.300"/><path d="M55 885l-4.500 5" stroke="#222" stroke-width="1.400"/>
<text class="nw" x="73" y="888.500" font-size="14" fill="#333" style="transform:scaleX(.87)">Type here to search</text>
<path d="M280 878q6-3 12-1l5 5 5-1q-1 4-4 6l-1 7-4 4-2-9-6-2-6-4z" fill="#2e8b20"/><circle cx="270" cy="878" r="3" fill="#b060e0"/><circle cx="275" cy="890" r="4" fill="#f07a30"/><circle cx="312" cy="877" r="5" fill="#9060d0"/><circle cx="317" cy="890" r="4" fill="#f0b060"/><circle cx="305" cy="889" r="1.500" fill="#3bb"/>
<circle cx="346" cy="883.500" r="6" stroke="#fff" stroke-width="2" fill="none"/>
<path d="M381 877h8v13h-8zM391 877h4M391 883h4M391 889h4" stroke="#fff" fill="none" stroke-width="1.500"/>
<circle cx="429" cy="883" r="4.500" stroke="#fff" stroke-width="3.500" fill="none"/><circle cx="429" cy="883" r="7" stroke="#fff" stroke-width="2" stroke-dasharray="2.500 3" fill="none"/>
<rect x="460" y="876" width="18" height="18" rx="2" fill="#f0f0f0"/><rect x="464" y="872" width="10" height="6" fill="none" stroke="#2a8ad0" stroke-width="1.500"/><rect x="465" y="881" width="3.500" height="3.500" fill="#e8532c"/><rect x="469.500" y="881" width="3.500" height="3.500" fill="#80b832"/><rect x="465" y="885.500" width="3.500" height="3.500" fill="#2a8ad0"/><rect x="469.500" y="885.500" width="3.500" height="3.500" fill="#f7b900"/>
<path d="M501 880l10-7 10 7v14h-20z" fill="#1e90e0"/><path d="M501 880l10 7 10-7" fill="#7cc8f4"/>
<rect x="544" y="873" width="15" height="21" rx="1" fill="#607078"/><rect x="546" y="875" width="11" height="4" fill="#4aa8e8"/><path d="M546 881h3v3h-3zM550.500 881h3v3h-3zM546 886h3v3h-3zM550.500 886h3v3h-3z" fill="#ddd"/>
<path d="M583 877h8l2 2h8v15h-18z" fill="#f5c542"/><rect x="583" y="882" width="18" height="12" fill="#ffd968"/><rect x="588" y="886" width="8" height="8" fill="#2a8ad0"/>
<circle cx="631" cy="883" r="10" fill="#1a9ad6"/><path d="M624 888q4 6 10 4 6-2 6-5-5 4-10 1-3-3-1-7-6 2-5 7z" fill="#58d060"/><circle cx="633" cy="879" r="3.500" fill="#1f2c30"/>
<text x="645" y="887" class="tk" style="transform:scaleX(.95)">Messenger | Faceb...</text><rect x="616" y="897" width="129" height="3" fill="#f5d9b5"/>
<rect x="747" y="867" width="134" height="33" fill="#3a464a"/><circle cx="766" cy="883" r="9.500" fill="#34a853"/><path d="M766 873.500a9.500 9.500 0 0 1 8.500 5h-8.500zM766 873.500a9.500 9.500 0 0 0-8 4.500l4 7 1-4z" fill="#ea4335"/><path d="M774.500 878.500a9.500 9.500 0 0 1-6 14l4-9z" fill="#fbbc04"/><circle cx="766" cy="883" r="4.500" fill="#4285f4" stroke="#fff" stroke-width="1.500"/>
<text x="780" y="887" class="tk" style="transform:scaleX(.82)">137.75.97.181 - DCV...</text><rect x="747" y="897" width="134" height="3" fill="#f5d9b5"/>
<path d="M892 872l9 3 9-3v17l-9 6-9-6z" fill="#b51c24"/><path d="M896 878l5 6 5-6v8l-5 4-5-4z" fill="#1f2c30"/>
<circle cx="942" cy="883" r="9" fill="#e9683f"/><rect x="930" y="876" width="12" height="13" rx="1" fill="#c9401f"/><text x="936" y="887" font-size="10" font-weight="bold" fill="#fff" text-anchor="middle">P</text>
<text x="955" y="887" class="tk">LightningProbabilit...</text><rect x="925" y="897" width="128" height="3" fill="#f5d9b5"/>
<ellipse cx="1295" cy="883" rx="8" ry="9" fill="#f6c231"/><circle cx="1302" cy="891" r="2.500" fill="#d91e1e"/>
<text class="nw" x="1312" y="889" font-size="13.500" fill="#f2f2f2" style="transform:scaleX(.84)">54°F  Sunny</text>
<path d="M1387 886l5-5 5 5" stroke="#fff" fill="none" stroke-width="1.200"/><rect x="1408" y="876" width="7" height="10" rx="3" stroke="#fff" fill="none"/><path d="M1408 889h7" stroke="#fff"/><path d="M1426 887a3 3 0 0 1 1-6 4 4 0 0 1 7-1 3.500 3.500 0 0 1 3 7z" fill="#e8e8e8"/><rect x="1449" y="875" width="6" height="14" rx="3" fill="#f2f2f2"/><path d="M1447 891h10" stroke="#fff"/><rect x="1467" y="878" width="10" height="9" stroke="#fff" fill="#666"/><path d="M1490 888v-2M1493 888v-5M1496 888v-8M1499 888v-11" stroke="#aaa"/>
<text x="1512" y="880" font-size="11" fill="#f2f2f2">1:03 PM</text><text x="1508" y="895" font-size="11" fill="#f2f2f2">5/25/2022</text>
<path d="M1566 877h14v11h-8l-3 3v-3h-3z" stroke="#fff" fill="none" stroke-width="1.300"/>
</svg>
</body></html>
